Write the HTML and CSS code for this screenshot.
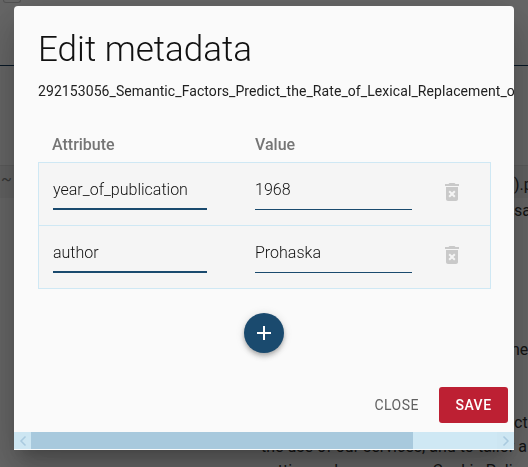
FILE: index.html
```html
<!DOCTYPE html>
<html lang="en">
<head>
    <meta charset="UTF-8">
    <meta name="viewport" content="width=device-width, initial-scale=1.0">
    <title>Edit metadata</title>
    <link rel="stylesheet" href="styles.css">
</head>
<body>
    <!-- page behind the dialog -->
    <div class="page">
        <header class="page-header"><span class="page-btn"></span></header>
        <div class="page-band"></div>
        <div class="file-row">
            <span class="file-tilde">~</span>
            <div class="file-text">
                <p>).p</p>
                <p>sa</p>
            </div>
        </div>
        <p class="page-line line-ne">ne_</p>
        <div class="cookie">
            <p>cti</p>
            <p class="cookie-wide">the use of our services, and to tailor a</p>
            <p class="cookie-wide">settings, please see our Cookie Policy</p>
        </div>
    </div>

    <div class="overlay"></div>

    <div class="modal">
        <div class="modal-content">
            <h1 class="modal-title">Edit metadata</h1>
            <p class="modal-file">292153056_Semantic_Factors_Predict_the_Rate_of_Lexical_Replacement_of_Content_Words.pdf</p>

            <div class="table-head">
                <span class="col-attr">Attribute</span>
                <span class="col-value">Value</span>
            </div>
            <div class="table-body">
                <div class="meta-row">
                    <div class="field field-attr">year_of_publication</div>
                    <div class="field field-value">1968</div>
                    <svg class="trash" viewBox="0 0 24 24"><path d="M6 19c0 1.1.9 2 2 2h8c1.1 0 2-.9 2-2V7H6v12zm2.46-7.12l1.41-1.41L12 12.59l2.12-2.12 1.41 1.41L13.41 14l2.12 2.12-1.41 1.41L12 15.41l-2.12 2.12-1.41-1.41L10.59 14l-2.13-2.12zM15.5 4l-1-1h-5l-1 1H5v2h14V4z"/></svg>
                </div>
                <div class="meta-row">
                    <div class="field field-attr">author</div>
                    <div class="field field-value">Prohaska</div>
                    <svg class="trash" viewBox="0 0 24 24"><path d="M6 19c0 1.1.9 2 2 2h8c1.1 0 2-.9 2-2V7H6v12zm2.46-7.12l1.41-1.41L12 12.59l2.12-2.12 1.41 1.41L13.41 14l2.12 2.12-1.41 1.41L12 15.41l-2.12 2.12-1.41-1.41L10.59 14l-2.13-2.12zM15.5 4l-1-1h-5l-1 1H5v2h14V4z"/></svg>
                </div>
            </div>

            <div class="add-wrap">
                <button class="add-btn">
                    <svg viewBox="0 0 24 24"><path d="M19 13h-6v6h-2v-6H5v-2h6V5h2v6h6v2z"/></svg>
                </button>
            </div>

            <div class="modal-actions">
                <button class="btn-close">CLOSE</button>
                <button class="btn-save">SAVE</button>
            </div>
        </div>

        <div class="scrollbar">
            <span class="scroll-arrow"><svg viewBox="0 0 8 12"><path d="M6.5 1.5 2 6l4.500 4.500"/></svg></span>
            <span class="scroll-thumb"></span>
            <span class="scroll-rest"></span>
            <span class="scroll-arrow"><svg viewBox="0 0 8 12"><path d="M1.500 1.500 6 6l-4.500 4.500"/></svg></span>
        </div>
    </div>
</body>
</html>
```

FILE: styles.css
```css
* {
    box-sizing: border-box;
}

html, body {
    height: 100%;
}

body {
    margin: 0;
    overflow: hidden;
    background: #fff;
    font-family: Roboto, sans-serif;
    color: #212121;
}

p {
    margin: 0;
}

/* page behind the dialog */
.page {
    height: 467px;
    overflow: hidden;
    font-size: 16px;
    color: #333;
}

.page-header {
    height: 66px;
    border-bottom: 1px solid #123a5c;
    background: #fff;
}

.page-btn {
    display: block;
    width: 18px;
    height: 3px;
    margin-left: 3px;
    border: 1px solid #ccc;
    border-top: 0;
    border-radius: 0 0 3px 3px;
}

.page-band {
    height: 99px;
    background: #fff;
}

.file-row {
    display: flex;
    justify-content: space-between;
    height: 53px;
    border-top: 1px solid #e4e4e4;
    background: linear-gradient(#f3f3f3 32px, #fff 32px);
}

.file-tilde {
    height: 32px;
    padding: 4px 0 0 1px;
    color: #888;
}

.file-text {
    width: 14px;
    line-height: 26px;
    padding-top: 6px;
    white-space: nowrap;
}

.page-line {
    padding: 122px 0 0 511px;
    white-space: nowrap;
}

.cookie {
    padding-top: 52px;
    line-height: 24px;
    white-space: nowrap;
    padding-left: 514px;
}

.cookie-wide {
    margin-left: -253px;
}

.overlay {
    position: fixed;
    inset: 0;
    background: rgba(0, 0, 0, 0.6);
}

/* dialog */
.modal {
    position: fixed;
    top: 6px;
    left: 14px;
    width: 500px;
    height: 444px;
    display: flex;
    flex-direction: column;
    padding-bottom: 1px;
    background: #fafafa;
    border-radius: 4px 4px 0 0;
    box-shadow: 0 11px 15px -7px rgba(0, 0, 0, 0.2),
                0 24px 38px 3px rgba(0, 0, 0, 0.14),
                0 9px 46px 8px rgba(0, 0, 0, 0.12);
    overflow: hidden;
}

.modal-content {
    flex: 1;
    min-height: 0;
    padding: 24px 0 0 24px;
    overflow: hidden;
}

.modal-title {
    margin: 0;
    font-size: 35px;
    font-weight: 300;
    line-height: 40px;
    color: #111;
}

.modal-file {
    margin-top: 11px;
    font-size: 14px;
    letter-spacing: 0.08px;
    line-height: 20px;
    white-space: nowrap;
    color: #212121;
}

.table-head {
    display: flex;
    margin-top: 32px;
    height: 29px;
    padding-left: 14px;
    font-size: 16px;
    font-weight: 500;
    line-height: 24px;
    color: #757575;
}

.col-attr {
    width: 203px;
}

.table-body {
    width: 453px;
    border: 1px solid #cfe8f4;
    background: #f5f5f5;
}

.meta-row {
    display: flex;
    align-items: flex-start;
    height: 62px;
    padding-left: 14px;
}

.meta-row + .meta-row {
    border-top: 1px solid #cfe8f4;
    height: 63px;
}

.field {
    height: 47px;
    padding-top: 15px;
    font-size: 16px;
    font-weight: 300;
    line-height: 24px;
    color: #111;
    white-space: nowrap;
}

.field-attr {
    width: 154px;
    margin-right: 48px;
    border-bottom: 2px solid #1a4a6e;
}

.field-value {
    width: 157px;
    border-bottom: 1px solid #1a4a6e;
}

.trash {
    width: 24px;
    height: 24px;
    margin: 17px 0 0 28px;
    fill: #c9c9c9;
}

.add-wrap {
    display: flex;
    justify-content: center;
    margin: 24px 0 0 -24px;
}

.add-btn {
    display: flex;
    align-items: center;
    justify-content: center;
    width: 40px;
    height: 40px;
    padding: 0;
    border: 0;
    border-radius: 50%;
    background: #1a4a6e;
    box-shadow: 0 2px 4px -1px rgba(0, 0, 0, 0.2),
                0 4px 5px 0 rgba(0, 0, 0, 0.14),
                0 1px 10px 0 rgba(0, 0, 0, 0.12);
}

.add-btn svg {
    width: 24px;
    height: 24px;
    fill: #fff;
}

.modal-actions {
    display: flex;
    align-items: center;
    justify-content: flex-end;
    gap: 20px;
    margin: 34px 6px 0 0;
}

.btn-close,
.btn-save {
    height: 36px;
    padding: 0;
    border: 0;
    font-family: Roboto, sans-serif;
    font-size: 14px;
    letter-spacing: 0.5px;
}

.btn-close {
    background: none;
    color: #616161;
}

.btn-save {
    width: 69px;
    border-radius: 3px;
    background: #bd2033;
    color: #fff;
    font-weight: 500;
}

/* horizontal scrollbar along the dialog bottom */
.scrollbar {
    display: flex;
    flex: none;
    height: 17px;
    background: #cfe8f4;
}

.scroll-arrow {
    display: flex;
    align-items: center;
    justify-content: center;
    width: 17px;
    background: #cde6f2;
}

.scroll-arrow svg {
    width: 8px;
    height: 12px;
    fill: none;
    stroke: #a9cadf;
    stroke-width: 1.500;
}

.scroll-thumb {
    width: 382px;
    background: #a8c9dd;
}

.scroll-rest {
    flex: 1;
}
```
